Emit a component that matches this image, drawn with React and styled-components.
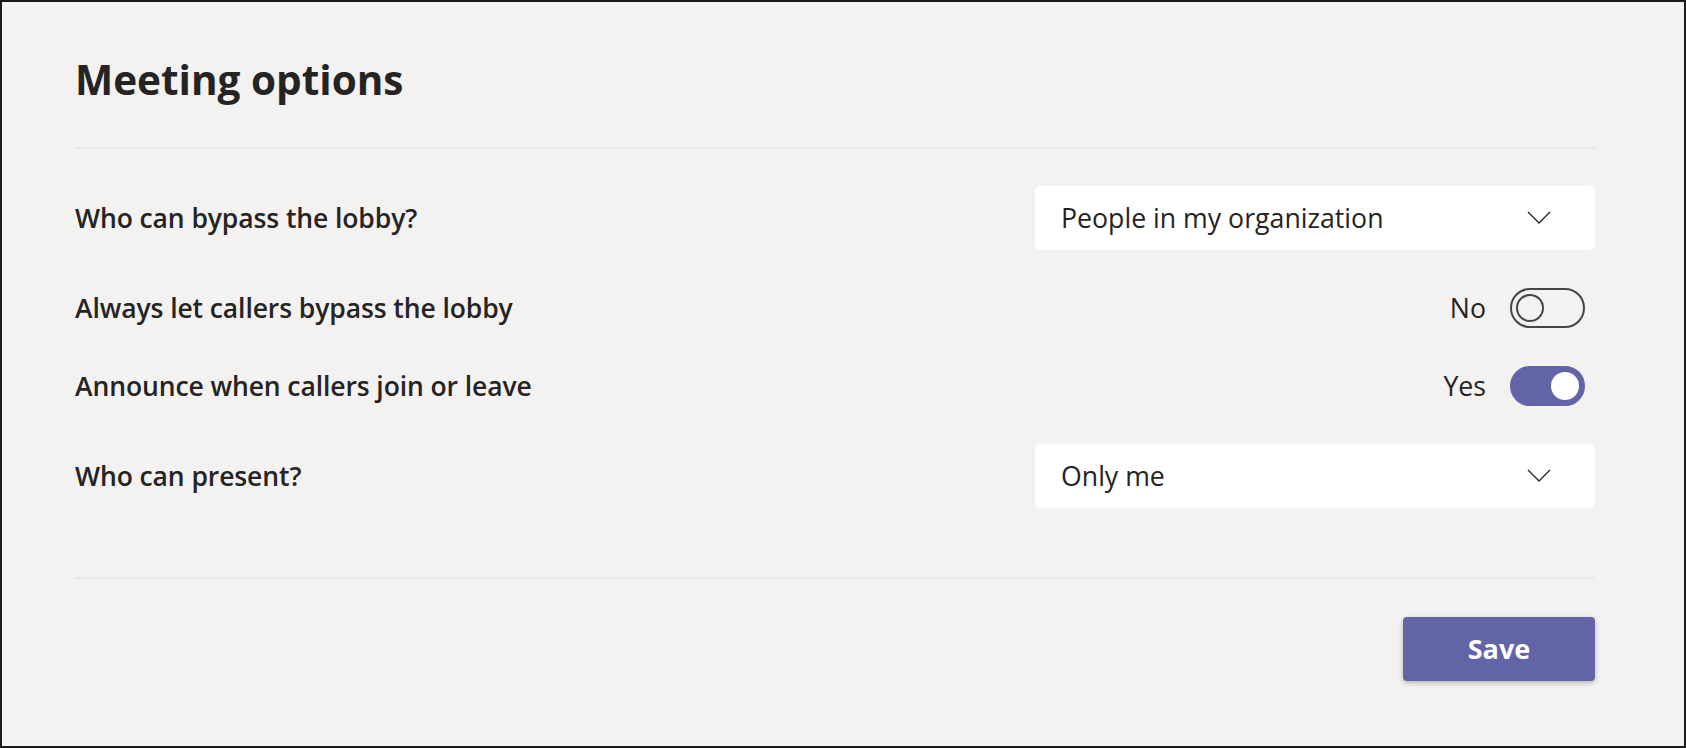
import React, { useState } from "react";
import styled, { createGlobalStyle } from "styled-components";

const GlobalStyle = createGlobalStyle`
  html, body {
    margin: 0;
    padding: 0;
    background: #f3f2f1;
  }
  * {
    box-sizing: border-box;
  }
`;

const Frame = styled.div`
  width: 1686px;
  height: 748px;
  border: 2px solid #1b1a19;
  background: #f3f2f1;
  padding: 0 89px 0 73px;
  font-family: "Open Sans", "Noto Sans", sans-serif;
  color: #252423;
  display: flex;
  flex-direction: column;
`;

const Title = styled.h1`
  margin: 58px 0 0;
  font-size: 40.5px;
  line-height: 1;
  font-weight: 700;
  color: #252423;
`;

const Divider = styled.div`
  height: 2px;
  background: #ebe9e7;
  margin-top: ${(p) => p.$top}px;
`;

const Options = styled.div`
  display: flex;
  flex-direction: column;
  gap: 38px;
  margin-top: 37px;
`;

const Row = styled.div`
  display: flex;
  align-items: center;
  justify-content: space-between;
  height: ${(p) => (p.$tall ? 64 : 40)}px;
`;

const Label = styled.span`
  font-size: 26.5px;
  font-weight: 600;
  letter-spacing: -0.1px;
`;

const Select = styled.div`
  width: 560px;
  height: 64px;
  background: #ffffff;
  border-radius: 5px;
  display: flex;
  align-items: center;
  justify-content: space-between;
  padding: 0 44px 0 26px;
  font-size: 26.7px;
  cursor: pointer;
`;

const ToggleGroup = styled.div`
  display: flex;
  align-items: center;
  gap: 24px;
  margin-right: 10px;
  font-size: 26.7px;
`;

const Track = styled.button`
  width: 75px;
  height: 40px;
  border-radius: 20px;
  border: 2px solid ${(p) => (p.$on ? "#6264a7" : "#484644")};
  background: ${(p) => (p.$on ? "#6264a7" : "transparent")};
  padding: 0 4px;
  display: flex;
  align-items: center;
  justify-content: ${(p) => (p.$on ? "flex-end" : "flex-start")};
  cursor: pointer;
`;

const Knob = styled.span`
  width: 28px;
  height: 28px;
  border-radius: 50%;
  background: ${(p) => (p.$on ? "#ffffff" : "transparent")};
  border: ${(p) => (p.$on ? "none" : "2px solid #484644")};
`;

const Footer = styled.div`
  display: flex;
  justify-content: flex-end;
  margin-top: 38px;
`;

const SaveButton = styled.button`
  width: 192px;
  height: 64px;
  border: none;
  border-radius: 4px;
  background: #6264a7;
  color: #ffffff;
  font-family: inherit;
  font-size: 27px;
  font-weight: 700;
  box-shadow: 0 2px 5px rgba(0, 0, 0, 0.25);
  cursor: pointer;
`;

const Chevron = () => (
  <svg width="24" height="13" viewBox="0 0 24 13" fill="none">
    <polyline
      points="1,1 12,12 23,1"
      stroke="#252423"
      strokeWidth="1.4"
      strokeLinejoin="round"
    />
  </svg>
);

const Toggle = ({ on, onChange }) => (
  <ToggleGroup>
    <span>{on ? "Yes" : "No"}</span>
    <Track $on={on} onClick={onChange}>
      <Knob $on={on} />
    </Track>
  </ToggleGroup>
);

export default function App() {
  const [callers, setCallers] = useState(false);
  const [announce, setAnnounce] = useState(true);

  return (
    <>
      <GlobalStyle />
      <Frame>
        <Title>Meeting options</Title>
        <Divider $top={46} />
        <Options>
          <Row $tall>
            <Label>Who can bypass the lobby?</Label>
            <Select>
              People in my organization
              <Chevron />
            </Select>
          </Row>
          <Row>
            <Label>Always let callers bypass the lobby</Label>
            <Toggle on={callers} onChange={() => setCallers(!callers)} />
          </Row>
          <Row>
            <Label>Announce when callers join or leave</Label>
            <Toggle on={announce} onChange={() => setAnnounce(!announce)} />
          </Row>
          <Row $tall>
            <Label>Who can present?</Label>
            <Select>
              Only me
              <Chevron />
            </Select>
          </Row>
        </Options>
        <Divider $top={69} />
        <Footer>
          <SaveButton>Save</SaveButton>
        </Footer>
      </Frame>
    </>
  );
}
